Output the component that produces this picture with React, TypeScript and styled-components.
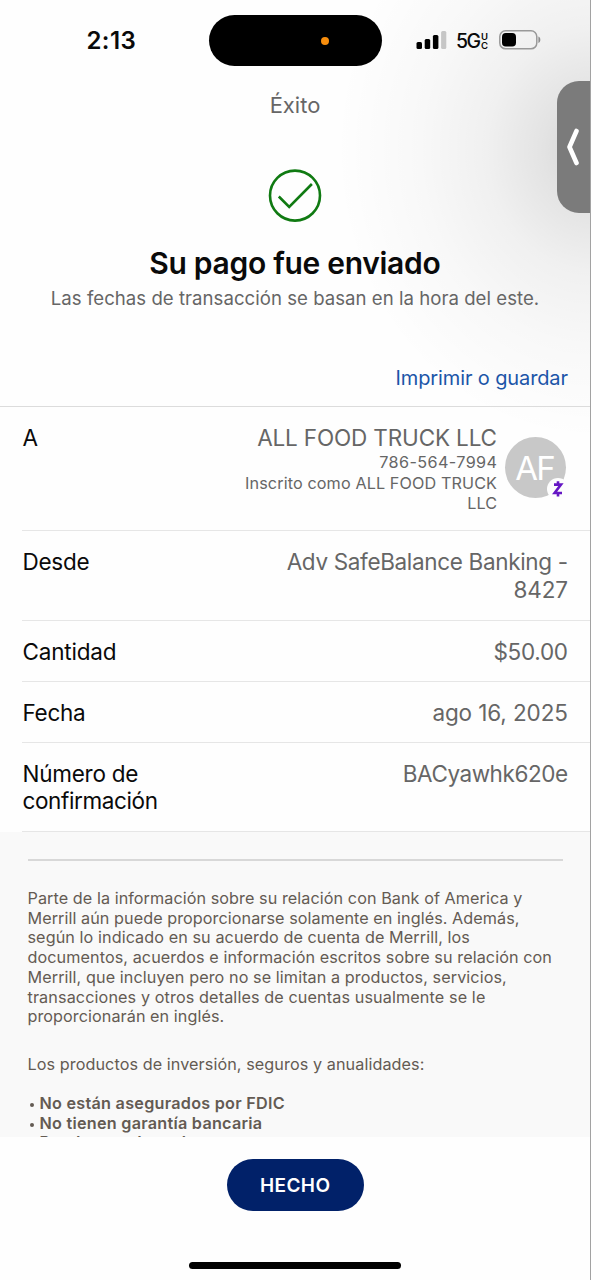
import React from "react";
import styled, { createGlobalStyle } from "styled-components";

const Global = createGlobalStyle`
  *, *::before, *::after { box-sizing: border-box; }
  body { margin: 0; background: #fff; }
`;

const Screen = styled.main`
  position: relative;
  display: flex;
  flex-direction: column;
  width: 591px;
  height: 1280px;
  overflow: hidden;
  background: #fefefe;
  color: #0a0a0a;
  font-family: Inter, "Liberation Sans", sans-serif;
  border-right: 1px solid #a2a2a2;
`;

const Shade = styled.div`
  position: absolute;
  inset: 0 0 auto auto;
  width: 270px;
  height: 470px;
  background: radial-gradient(ellipse 260px 290px at 275px 150px,
    rgba(0, 0, 0, 0.17) 0%, rgba(0, 0, 0, 0.105) 20%, rgba(0, 0, 0, 0.055) 42%, rgba(0, 0, 0, 0.022) 68%, transparent 100%);
`;

const Line = styled.span<{ $size: number; $lh: number; $track?: number; $weight?: number; $color?: string }>`
  display: block;
  white-space: nowrap;
  font-size: ${(p) => p.$size}px;
  line-height: ${(p) => p.$lh}px;
  letter-spacing: ${(p) => p.$track ?? 0}px;
  margin-right: ${(p) => -(p.$track ?? 0)}px;
  font-weight: ${(p) => p.$weight ?? 400};
  color: ${(p) => p.$color ?? "inherit"};
`;

const StatusBar = styled.header`
  position: relative;
  display: grid;
  grid-template-columns: 209px 173px 1fr;
  align-items: center;
  height: 81px;
`;

const Clock = styled.div`
  padding-left: 86.5px;
`;

const Island = styled.div`
  display: flex;
  align-items: center;
  justify-content: flex-end;
  height: 51px;
  padding-right: 53px;
  border-radius: 26px;
  background: #000;
`;

const MicDot = styled.i`
  width: 8px;
  height: 8px;
  border-radius: 50%;
  background: #f78d0c;
`;

const Indicators = styled.div`
  display: flex;
  align-items: center;
  padding-left: 34px;
  margin-top: -1px;
`;

const Network = styled.div`
  display: flex;
  align-items: center;
  width: 32px;
  margin: 2px 10px 0 9px;
`;

const NetworkSuffix = styled.div`
  display: flex;
  flex-direction: column;
`;

const Title = styled.div`
  position: relative;
  display: flex;
  justify-content: center;
  height: 88px;
  padding-top: 9.5px;
`;

const Hero = styled.section`
  position: relative;
  display: flex;
  flex-direction: column;
  align-items: center;
  height: 185px;

  svg { flex: none; }
  h1 { margin: 21px 0 0; }
  p { margin: 2px 0 0; }
`;

const Actions = styled.div`
  position: relative;
  display: flex;
  justify-content: flex-end;
  height: 53px;
  padding: 10px 22px 0 0;
  border-bottom: 1px solid #dcdcdc;
`;

const Details = styled.dl`
  position: relative;
  margin: 0;
  padding-left: 22px;
`;

const Row = styled.div<{ $height: number }>`
  display: flex;
  justify-content: space-between;
  height: ${(p) => p.$height}px;
  padding: 17px 22px 0 0.5px;
  border-bottom: 1px solid #e6e6e6;

  dt { margin: 0; }
  dd { margin: 0; display: flex; color: #666; }
`;

const Lines = styled.div`
  display: flex;
  flex-direction: column;
  align-items: flex-end;
`;

const Avatar = styled.div`
  position: relative;
  display: flex;
  align-items: center;
  justify-content: center;
  width: 61px;
  height: 61px;
  margin: 13px 2px 0 8px;
  border-radius: 50%;
  background: #c8c8c8;
`;

const ZelleBadge = styled.div`
  position: absolute;
  right: -3px;
  bottom: -2px;
  display: flex;
  align-items: center;
  justify-content: center;
  width: 22px;
  height: 22px;
  border-radius: 50%;
  background: #fdfdfd;
`;

const Legal = styled.section`
  flex: none;
  height: 305px;
  padding: 27px 27px 0 27.5px;
  overflow: hidden;
  background: #f9f9f9;
  color: #645b53;
`;

const Rule = styled.hr`
  height: 2px;
  margin: 0 0 28px;
  border: 0;
  background: #d8d8d8;
`;

const Paragraph = styled.p`
  margin: 0 0 28px;
`;

const Bullets = styled.ul`
  margin: -8.6px 0 0;
  padding: 0;
  list-style: none;

  li { display: flex; }
`;

const Bullet = styled.i`
  width: 4px;
  height: 4px;
  margin: 9px 6px 0 2px;
  border-radius: 50%;
  background: currentColor;
`;

const Footer = styled.footer`
  display: flex;
  flex-direction: column;
  align-items: center;
  justify-content: space-between;
  flex: 1;
  padding: 22px 0 11px;
`;

const DoneButton = styled.button`
  display: flex;
  align-items: center;
  justify-content: center;
  width: 137px;
  height: 52px;
  padding: 1px 0 0;
  border: 0;
  border-radius: 26px;
  background: #012169;
  color: #fff;
  font-family: inherit;
`;

const HomeBar = styled.div`
  width: 212px;
  height: 7px;
  border-radius: 4px;
  background: #000;
`;

const SideHandle = styled.button`
  position: absolute;
  top: 81px;
  right: -1px;
  display: flex;
  align-items: center;
  width: 34px;
  height: 132px;
  padding: 0 0 0 9px;
  border: 0;
  border-radius: 22px 0 0 22px;
  background: #7b7b7b;
`;

const legalLines: [string, number][] = [
  ["Parte de la información sobre su relación con Bank of America y", 0.065],
  ["Merrill aún puede proporcionarse solamente en inglés. Además,", 0.06],
  ["según lo indicado en su acuerdo de cuenta de Merrill, los", 0.08],
  ["documentos, acuerdos e información escritos sobre su relación con", 0.08],
  ["Merrill, que incluyen pero no se limitan a productos, servicios,", 0.085],
  ["transacciones y otros detalles de cuentas usualmente se le", 0.11],
  ["proporcionarán en inglés.", 0.06],
];

const bullets = ["No están asegurados por FDIC", "No tienen garantía bancaria", "Pueden perder valor"];

export default function App() {
  return (
    <Screen>
      <Global />
      <Shade />
      <StatusBar>
        <Clock><Line $size={24} $lh={28} $weight={600} $track={0.4}>2:13</Line></Clock>
        <Island><MicDot /></Island>
        <Indicators>
          <svg width="31" height="20" viewBox="0 0 31 20">
            <rect x="0.5" y="12" width="5.5" height="7" rx="1.5" />
            <rect x="8.7" y="9" width="5.5" height="10" rx="1.5" />
            <rect x="16.9" y="5" width="5.5" height="14" rx="1.5" />
            <rect x="25.1" y="1" width="5.2" height="18" rx="1.5" fill="#c6c6c6" />
          </svg>
          <Network>
            <Line $size={19.5} $lh={20} $weight={500} $track={-1.6}>5G</Line>
            <NetworkSuffix>
              <Line $size={9.5} $lh={9} $weight={600}>U</Line>
              <Line $size={9.5} $lh={9} $weight={600}>C</Line>
            </NetworkSuffix>
          </Network>
          <svg width="44" height="20" viewBox="0 0 44 20">
            <rect x="1.8" y="0.8" width="37" height="18" rx="5.8" fill="none" stroke="#999" strokeWidth="1.5" />
            <rect x="4" y="3" width="14" height="13.6" rx="3.8" />
            <path d="M40.4 6.6c2.6 0.6 2.6 5.8 0 6.4z" fill="#8c8c8c" />
          </svg>
        </Indicators>
      </StatusBar>

      <Title><Line $size={22} $lh={28} $color="#666">Éxito</Line></Title>

      <Hero>
        <svg width="54" height="54" viewBox="0 0 54 54" fill="none" stroke="#107a12" strokeWidth="2.6">
          <circle cx="27" cy="26.6" r="25" />
          <path d="M10.8 27.5 21.2 38 43.9 15" />
        </svg>
        <h1><Line $size={30} $lh={38} $weight={600} $track={-0.3}>Su pago fue enviado</Line></h1>
        <p><Line $size={18.6} $lh={28} $color="#666" $track={0.03}>Las fechas de transacción se basan en la hora del este.</Line></p>
      </Hero>

      <Actions><Line $size={20} $lh={28} $color="#1b55a8" $track={-0.12}>Imprimir o guardar</Line></Actions>

      <Details>
        <Row $height={124}>
          <dt><Line $size={22.5} $lh={28}>A</Line></dt>
          <dd>
            <Lines>
              <Line $size={22.5} $lh={28} $track={-0.15}>ALL FOOD TRUCK LLC</Line>
              <Line $size={16.2} $lh={21} $track={0.4}>786-564-7994</Line>
              <Line $size={16.2} $lh={20} $track={0.11}>Inscrito como ALL FOOD TRUCK</Line>
              <Line $size={16.2} $lh={20}>LLC</Line>
            </Lines>
            <Avatar>
              <Line $size={33} $lh={40} $weight={400} $color="#fff" $track={-1.6}>AF</Line>
              <ZelleBadge>
                <svg width="12" height="18" viewBox="0 0 12 18" fill="none" stroke="#6516c4" strokeWidth="2.6">
                  <path d="M2 4.6H9L2.6 13H10M6 1.2V4.8M6 12.8V16.6" />
                </svg>
              </ZelleBadge>
            </Avatar>
          </dd>
        </Row>
        <Row $height={90}>
          <dt><Line $size={22.5} $lh={28} $track={-0.25}>Desde</Line></dt>
          <dd>
            <Lines>
              <Line $size={22.5} $lh={27.5} $track={-0.34}>Adv SafeBalance Banking -</Line>
              <Line $size={22.5} $lh={27} $track={-0.1}>8427</Line>
            </Lines>
          </dd>
        </Row>
        <Row $height={61}>
          <dt><Line $size={22.5} $lh={28} $track={-0.2}>Cantidad</Line></dt>
          <dd><Line $size={22.5} $lh={28} $track={-0.3}>$50.00</Line></dd>
        </Row>
        <Row $height={61}>
          <dt><Line $size={22.5} $lh={28} $track={-0.3}>Fecha</Line></dt>
          <dd><Line $size={22.5} $lh={28} $track={-0.1}>ago 16, 2025</Line></dd>
        </Row>
        <Row $height={89}>
          <dt>
            <Line $size={22.5} $lh={27} $track={-0.25}>Número de</Line>
            <Line $size={22.5} $lh={27} $track={-0.38}>confirmación</Line>
          </dt>
          <dd><Line $size={22.5} $lh={27} $track={-0.45}>BACyawhk620e</Line></dd>
        </Row>
      </Details>

      <Legal>
        <Rule />
        <Paragraph>
          {legalLines.map(([text, track]) => (
            <Line key={text} $size={16.2} $lh={19.7} $track={track}>{text}</Line>
          ))}
        </Paragraph>
        <Paragraph><Line $size={16.2} $lh={19.7} $track={0.08}>Los productos de inversión, seguros y anualidades:</Line></Paragraph>
        <Bullets>
          {bullets.map((text) => (
            <li key={text}><Bullet /><Line $size={16.2} $lh={19.6} $weight={600} $track={0.26}>{text}</Line></li>
          ))}
        </Bullets>
      </Legal>

      <Footer>
        <DoneButton><Line $size={19} $lh={28} $weight={600} $track={0.4}>HECHO</Line></DoneButton>
        <HomeBar />
      </Footer>

      <SideHandle aria-label="Abrir">
        <svg width="14" height="38" viewBox="0 0 14 38" fill="none" stroke="#fff" strokeWidth="4.6" strokeLinecap="round" strokeLinejoin="round">
          <path d="M10.5 3 3.5 19 10.5 35" />
        </svg>
      </SideHandle>
    </Screen>
  );
}
